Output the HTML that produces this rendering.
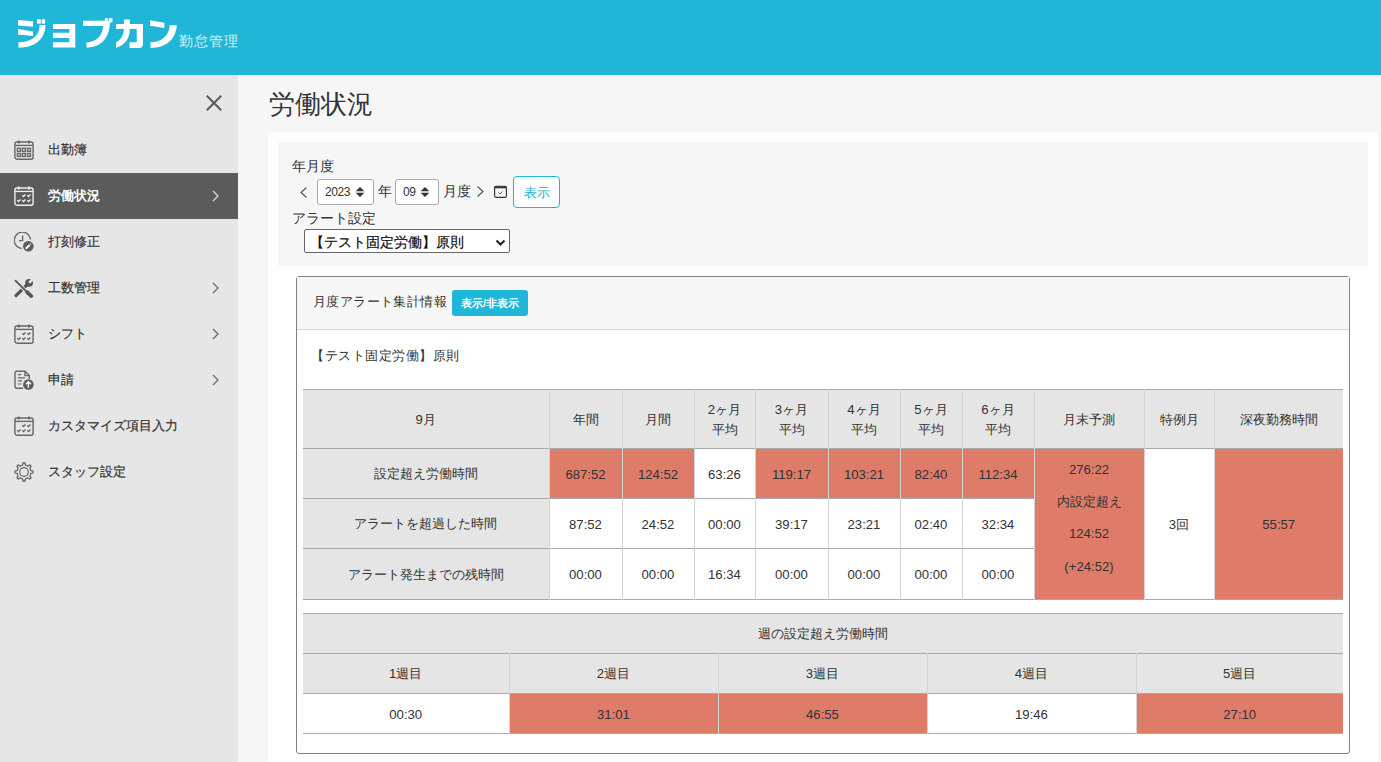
<!DOCTYPE html>
<html lang="ja">
<head>
<meta charset="utf-8">
<title>労働状況 | ジョブカン勤怠管理</title>
<style>
*{box-sizing:border-box;margin:0;padding:0}
html,body{width:1381px;height:762px;overflow:hidden}
body{font-family:"Liberation Sans",sans-serif;color:#333;background:#f6f6f6;position:relative;font-size:13px}
.abs{position:absolute}
#hdr{left:0;top:0;width:1381px;height:75px;background:#1fb6d8}
#side{left:0;top:75px;width:238px;height:687px;background:#e6e6e6}
.nav{position:absolute;left:0;width:238px;height:46px;color:#333;font-size:13.2px;-webkit-text-stroke:0.2px #333}
.nav .ic{position:absolute;left:14px;top:13px;width:20px;height:20px}
.nav .tx{position:absolute;left:48px;top:0;line-height:46px;white-space:nowrap}
.nav .chev{position:absolute;left:210px;top:17px;width:10px;height:12px}
.nav.act{background:#5b5b5b;color:#fff;font-weight:bold;-webkit-text-stroke:0}
#title{left:269px;top:86px;font-size:26px;line-height:36px;color:#333;white-space:nowrap}
#card{left:268px;top:132px;width:1110px;height:700px;background:#fff;border-radius:4px}
#filter{left:278px;top:142px;width:1090px;height:124px;background:#f6f6f6}
.lbl{font-size:14px;line-height:18px;white-space:nowrap}
.sel{position:absolute;background:#fff;border:1px solid #aaa;border-radius:3px;font-size:12px}
#panel{left:296px;top:276px;width:1054px;height:478px;border:1px solid #7b8187;border-radius:3px;background:#fff}
#phead{left:0;top:0;width:1052px;height:53px;background:#f7f7f7;border-bottom:1px solid #d6d6d6}
table{border-collapse:collapse;table-layout:fixed;position:absolute}
td,th{text-align:center;vertical-align:middle;font-weight:normal;font-size:13.15px;color:#333;padding:1px 0 0 0}
#t1{left:303px;top:389px;width:1040px}
#t2{left:303px;top:613px;width:1040px}
.hd{background:#e5e5e5}
.w{background:#fff}
.r{background:#df7b69}
#t1 tr,#t2 tr{border-top:1px solid #a9a9a9;border-bottom:1px solid #a9a9a9}
#t1 td,#t2 td{border-left:1px solid #d3d3d3;border-right:1px solid #d3d3d3}
#t1 td:first-child,#t2 td:first-child{border-left:none}
#t1 td:last-child,#t2 td:last-child{border-right:none}
</style>
</head>
<body>
<div id="hdr" class="abs">
  <svg class="abs" style="left:0;top:0" width="240" height="75" viewBox="0 0 240 75"><g fill="#fff">
<path d="M18 19.9L33 21.2V26.8L18 25.5Z"/><path d="M18 28.9L33 31.6V35.9L18 34.5Z"/>
<path d="M37 19.3H40.8V23.7H37Z"/><path d="M41.7 19.3H45.1V23.7H41.7Z"/>
<path d="M39.6 25H45.4C45.4 37 37.5 47.7 18.4 47.7V42.3C32.5 42.3 39.6 35.5 39.6 25Z"/>
<path d="M52.9 24H75.3V47.6H52.9V42.3H69.4V38H52.9V32.7H69.4V28.9H52.9Z"/>
<path d="M83 20.7H103V26H83Z"/><path d="M104.9 18.2H107.7V22.5H104.9Z"/><path d="M108.7 18.2H112.4V22.5H108.7Z"/>
<path d="M101 20.7H108C109.5 20.7 109.9 22 109.8 24C109.3 37 101.5 47.5 86.5 47.5V42.4C96.5 42.4 103 35 103 26L101 26Z"/>
<path d="M116.1 24H142.9V28.9H116.1Z"/>
<path d="M123.9 19.6H129.8V29C129.8 38 125.5 45 116.1 47.9V42.3C121.5 39.5 123.9 34.5 123.9 28Z"/>
<path d="M136.7 24H142.9V44.3Q142.9 47.9 139.3 47.9H129.5V42.3H136.7Z"/>
<path d="M150 20.2L164.4 22.7V28L150 25.8Z"/>
<path d="M169.7 25.2H176.8C176 38.5 167 47.9 150.5 47.9V42.3C162.5 42 169.2 35 169.7 25.2Z"/>
</g></svg>
  <div class="abs" style="left:179px;top:32px;font-size:14px;line-height:18px;color:rgba(255,255,255,0.82);letter-spacing:1px;font-weight:300">勤怠管理</div>
</div>

<div id="side" class="abs">
  <svg class="abs" style="left:205px;top:19px" width="18" height="18" viewBox="0 0 18 18"><path d="M1.8 1.8L16.2 16.2M16.2 1.8L1.8 16.2" stroke="#5a5a5a" stroke-width="2" fill="none"/></svg>
</div>

<!-- nav items -->
<div class="nav" style="top:127px">
  <svg class="ic" viewBox="0 0 20 20"><g fill="none" stroke="#666" stroke-width="1.4"><rect x="0.9" y="2" width="18.2" height="17.2" rx="2"/><path d="M1 5.4H19"/><path d="M4.8 0.5V3.5M15 0.5V3.5" stroke-width="1.8"/><rect x="3.4" y="8.3" width="3" height="3"/><rect x="8.4" y="8.3" width="3" height="3"/><rect x="13.5" y="8.3" width="3" height="3"/><rect x="3.4" y="13.4" width="3" height="3"/><rect x="8.4" y="13.4" width="3" height="3"/><rect x="13.5" y="13.4" width="3" height="3"/></g></svg>
  <span class="tx">出勤簿</span>
</div>
<div class="nav act" style="top:173px">
  <svg class="ic" viewBox="0 0 20 20"><g fill="none" stroke="#eee" stroke-width="1.4"><rect x="0.9" y="2" width="18.2" height="17.2" rx="2"/><path d="M1 5.4H19"/><path d="M4.8 0.5V3.5M15 0.5V3.5" stroke-width="1.8"/><path d="M8.3 9.3l1.2 1.2 2-2M13.3 9.3l1.2 1.2 2-2M3.3 14.3l1.2 1.2 2-2M8.3 14.3l1.2 1.2 2-2M13.3 14.3l1.2 1.2 2-2" stroke-width="1.3"/></g></svg>
  <span class="tx">労働状況</span>
  <svg class="chev" viewBox="0 0 10 12"><path d="M3 1l5 5-5 5" stroke="#ddd" stroke-width="1.3" fill="none"/></svg>
</div>
<div class="nav" style="top:219px">
  <svg class="ic" viewBox="0 0 20 20"><g fill="none" stroke="#666"><path d="M7.6 16.5A8.2 8.2 0 1 1 16.6 7.6" stroke-width="1.3"/><path d="M8.6 3.5V8.6H5" stroke-width="1.3"/></g><circle cx="14.3" cy="14.3" r="5.3" fill="#5e5e5e"/><path d="M11.8 16.8l3.8-3.8" stroke="#fff" stroke-width="2"/><path d="M16.2 12.4l0.8-0.8" stroke="#fff" stroke-width="1.2"/></svg>
  <span class="tx">打刻修正</span>
</div>
<div class="nav" style="top:265px">
  <svg class="ic" viewBox="0 0 20 20"><path d="M2 17.6L14.8 5" stroke="#555" stroke-width="3.2" stroke-linecap="round"/><circle cx="15.1" cy="4.8" r="3.9" fill="#555"/><path d="M15.9 4L19.9 0" stroke="#e6e6e6" stroke-width="2.5" stroke-linecap="round"/><path d="M0.9 2.2L11.8 13.1" stroke="#e6e6e6" stroke-width="3.6"/><path d="M1.5 2.7L12 13.2" stroke="#555" stroke-width="1.8" stroke-linecap="round"/><path d="M13.3 14.3L17.3 18.1" stroke="#555" stroke-width="3.7" stroke-linecap="round"/></svg>
  <span class="tx">工数管理</span>
  <svg class="chev" viewBox="0 0 10 12"><path d="M3 1l5 5-5 5" stroke="#666" stroke-width="1.2" fill="none"/></svg>
</div>
<div class="nav" style="top:311px">
  <svg class="ic" viewBox="0 0 20 20"><g fill="none" stroke="#666" stroke-width="1.4"><rect x="0.9" y="2" width="18.2" height="17.2" rx="2"/><path d="M1 5.4H19"/><path d="M4.8 0.5V3.5M15 0.5V3.5" stroke-width="1.8"/><path d="M8.3 9.3l1.2 1.2 2-2M13.3 9.3l1.2 1.2 2-2M3.3 14.3l1.2 1.2 2-2M8.3 14.3l1.2 1.2 2-2M13.3 14.3l1.2 1.2 2-2" stroke-width="1.3"/></g></svg>
  <span class="tx">シフト</span>
  <svg class="chev" viewBox="0 0 10 12"><path d="M3 1l5 5-5 5" stroke="#666" stroke-width="1.2" fill="none"/></svg>
</div>
<div class="nav" style="top:357px">
  <svg class="ic" viewBox="0 0 20 20"><g fill="none" stroke="#666" stroke-width="1.4"><path d="M9 18.3H2.5a1.5 1.5 0 0 1-1.5-1.5V2.8a1.5 1.5 0 0 1 1.5-1.5H11l4.3 4.3V9"/><path d="M11 1.5V5.6H15"/><path d="M3.8 4.7H7.3M3.8 7.8H11M3.8 10.9H8M3.8 14H7.4" stroke-width="1.2"/></g><circle cx="14.4" cy="14.5" r="5.3" fill="#5e5e5e"/><path d="M14.4 17.8V11.8M11.9 14.2l2.5-2.5 2.5 2.5" stroke="#fff" stroke-width="1.4" fill="none"/></svg>
  <span class="tx">申請</span>
  <svg class="chev" viewBox="0 0 10 12"><path d="M3 1l5 5-5 5" stroke="#666" stroke-width="1.2" fill="none"/></svg>
</div>
<div class="nav" style="top:403px">
  <svg class="ic" viewBox="0 0 20 20"><g fill="none" stroke="#666" stroke-width="1.4"><rect x="0.9" y="2" width="18.2" height="17.2" rx="2"/><path d="M1 5.4H19"/><path d="M4.8 0.5V3.5M15 0.5V3.5" stroke-width="1.8"/><path d="M8.3 9.3l1.2 1.2 2-2M13.3 9.3l1.2 1.2 2-2M3.3 14.3l1.2 1.2 2-2M8.3 14.3l1.2 1.2 2-2M13.3 14.3l1.2 1.2 2-2" stroke-width="1.3"/></g></svg>
  <span class="tx">カスタマイズ項目入力</span>
</div>
<div class="nav" style="top:449px">
  <svg class="ic" viewBox="0 0 20 20"><g fill="none" stroke="#666" stroke-width="1.2"><path d="M8.63 3.13 L8.93 0.96 L11.07 0.96 L11.37 3.13 A7.0 7.0 0 0 1 13.89 4.18 L15.63 2.85 L17.15 4.37 L15.82 6.11 A7.0 7.0 0 0 1 16.87 8.63 L19.04 8.93 L19.04 11.07 L16.87 11.37 A7.0 7.0 0 0 1 15.82 13.89 L17.15 15.63 L15.63 17.15 L13.89 15.82 A7.0 7.0 0 0 1 11.37 16.87 L11.07 19.04 L8.93 19.04 L8.63 16.87 A7.0 7.0 0 0 1 6.11 15.82 L4.37 17.15 L2.85 15.63 L4.18 13.89 A7.0 7.0 0 0 1 3.13 11.37 L0.96 11.07 L0.96 8.93 L3.13 8.63 A7.0 7.0 0 0 1 4.18 6.11 L2.85 4.37 L4.37 2.85 L6.11 4.18 A7.0 7.0 0 0 1 8.63 3.13Z"/><circle cx="10" cy="10" r="4.3"/></g></svg>
  <span class="tx">スタッフ設定</span>
</div>

<div id="title" class="abs">労働状況</div>
<div id="card" class="abs"></div>
<div id="filter" class="abs"></div>

<div class="abs lbl" style="left:292px;top:157px">年月度</div>
<svg class="abs" style="left:298px;top:186px" width="12" height="13" viewBox="0 0 12 13"><path d="M8.5 1.5L3 6.5l5.5 5" stroke="#555" stroke-width="1.2" fill="none"/></svg>
<div class="sel" style="left:317px;top:179px;width:57px;height:26px"><span class="abs" style="left:7px;top:4px;line-height:16px;letter-spacing:-0.4px">2023</span><svg class="abs" style="left:37px;top:7px" width="10" height="10" viewBox="0 0 10 10"><path d="M0.7 4.2L5 0 9.3 4.2ZM0.7 5.8L5 10 9.3 5.8Z" fill="#333"/></svg></div>
<div class="abs lbl" style="left:378px;top:182px">年</div>
<div class="sel" style="left:395px;top:179px;width:44px;height:26px"><span class="abs" style="left:7px;top:4px;line-height:16px;letter-spacing:-0.3px">09</span><svg class="abs" style="left:24px;top:7px" width="10" height="10" viewBox="0 0 10 10"><path d="M0.7 4.2L5 0 9.3 4.2ZM0.7 5.8L5 10 9.3 5.8Z" fill="#333"/></svg></div>
<div class="abs lbl" style="left:443px;top:182px">月度</div>
<svg class="abs" style="left:474px;top:185px" width="12" height="13" viewBox="0 0 12 13"><path d="M3.5 1.5L9 6.5l-5.5 5" stroke="#555" stroke-width="1.2" fill="none"/></svg>
<svg class="abs" style="left:493px;top:184px" width="15" height="15" viewBox="0 0 15 15"><rect x="1.6" y="2.2" width="11.8" height="11.2" rx="1.5" fill="none" stroke="#333" stroke-width="1.15"/><path d="M1.6 3.3H13.4" stroke="#333" stroke-width="2"/><path d="M5.5 8.6l1.5 1.4 2.6-2.6" stroke="#666" stroke-width="1" fill="none"/></svg>
<div class="abs" style="left:513px;top:176px;width:47px;height:32px;border:1.5px solid #1fb6d8;border-radius:4px;background:#fff;color:#2aaed0;font-size:13px;line-height:31px;text-align:center">表示</div>

<div class="abs lbl" style="left:292px;top:209px">アラート設定</div>
<div class="sel" style="left:304px;top:229px;width:206px;height:24px;border-color:#666;border-radius:2px"><span class="abs" style="left:5px;top:3px;line-height:18px;font-size:14px;color:#111;-webkit-text-stroke:0.2px #111">【テスト固定労働】原則</span><svg class="abs" style="left:190px;top:9px" width="11" height="8" viewBox="0 0 11 8"><path d="M1.5 1.5l4 4 4-4" stroke="#222" stroke-width="2" fill="none"/></svg></div>

<div id="panel" class="abs">
  <div id="phead" class="abs"></div>
  <div class="abs" style="left:16px;top:16px;font-size:13px;letter-spacing:0.4px;line-height:18px;white-space:nowrap">月度アラート集計情報</div>
  <div class="abs" style="left:155px;top:13px;width:76px;height:26px;background:#1fb6d8;border-radius:3px;color:#fff;font-size:11px;font-weight:bold;line-height:26px;text-align:center">表示/非表示</div>
  <div class="abs" style="left:14px;top:70px;font-size:13px;letter-spacing:0.5px;line-height:18px;white-space:nowrap">【テスト固定労働】原則</div>
</div>

<table id="t1">
<colgroup><col style="width:246px"><col style="width:73px"><col style="width:72px"><col style="width:61px"><col style="width:73px"><col style="width:72px"><col style="width:62px"><col style="width:72px"><col style="width:110px"><col style="width:70px"><col style="width:129px"></colgroup>
<tr class="hd" style="height:59px;line-height:19.5px"><td>9月</td><td>年間</td><td>月間</td><td>2ヶ月<br>平均</td><td>3ヶ月<br>平均</td><td>4ヶ月<br>平均</td><td>5ヶ月<br>平均</td><td>6ヶ月<br>平均</td><td>月末予測</td><td>特例月</td><td>深夜勤務時間</td></tr>
<tr style="height:50px"><td class="hd">設定超え労働時間</td><td class="r">687:52</td><td class="r">124:52</td><td class="w">63:26</td><td class="r">119:17</td><td class="r">103:21</td><td class="r">82:40</td><td class="r">112:34</td><td class="r" rowspan="3" style="vertical-align:top"><div style="line-height:32.2px;padding-top:4px">276:22<br>内設定超え<br>124:52<br>(+24:52)</div></td><td class="w" rowspan="3">3回</td><td class="r" rowspan="3">55:57</td></tr>
<tr style="height:50px"><td class="hd">アラートを超過した時間</td><td class="w">87:52</td><td class="w">24:52</td><td class="w">00:00</td><td class="w">39:17</td><td class="w">23:21</td><td class="w">02:40</td><td class="w">32:34</td></tr>
<tr style="height:51px"><td class="hd">アラート発生までの残時間</td><td class="w">00:00</td><td class="w">00:00</td><td class="w">16:34</td><td class="w">00:00</td><td class="w">00:00</td><td class="w">00:00</td><td class="w">00:00</td></tr>
</table>

<table id="t2">
<colgroup><col style="width:206px"><col style="width:209px"><col style="width:209px"><col style="width:209px"><col style="width:207px"></colgroup>
<tr class="hd" style="height:40px"><td colspan="5">週の設定超え労働時間</td></tr>
<tr class="hd" style="height:40px"><td>1週目</td><td>2週目</td><td>3週目</td><td>4週目</td><td>5週目</td></tr>
<tr style="height:40px"><td class="w">00:30</td><td class="r">31:01</td><td class="r">46:55</td><td class="w">19:46</td><td class="r">27:10</td></tr>
</table>
</body>
</html>
